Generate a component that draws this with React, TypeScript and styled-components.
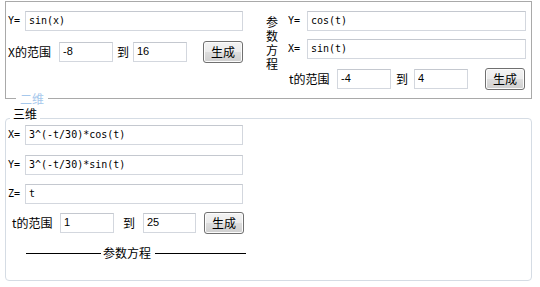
import React from "react";
import styled, { createGlobalStyle } from "styled-components";

const GlobalStyle = createGlobalStyle`
  html, body { margin: 0; padding: 0; background: #ffffff; }
  body {
    font-family: "Noto Sans CJK SC", "Liberation Sans", sans-serif;
    font-size: 12px;
    color: #000;
  }
  * { box-sizing: border-box; }
`;

const Page = styled.div`
  padding: 1px 0 0 5px;
  width: 540px;
`;

const TopPanel = styled.div`
  position: relative;
  width: 527px;
  height: 98px;
  border: 1px solid #a9a9a9;
  display: flex;
  padding: 9px 0 0 1px;
`;

const BottomPanel = styled.div`
  position: relative;
  width: 527px;
  height: 163px;
  margin-top: 19px;
  border: 1px solid #d5dce4;
  border-radius: 4px;
  padding: 6px 0 0 1px;
`;

const Legend = styled.span<{ $light?: boolean }>`
  position: absolute;
  background: #fff;
  padding: 0 3px;
  height: 14px;
  line-height: 14px;
  font-size: 12px;
  color: ${(p) => (p.$light ? "#a6c8ec" : "#000")};
`;

const BottomLegend = styled(Legend)`
  left: 10px;
  bottom: -8px;
  padding: 0 4px;
`;

const TopLegend = styled(Legend)`
  left: 4px;
  top: -12px;
`;

const Column = styled.div<{ $width?: number }>`
  display: flex;
  flex-direction: column;
  ${(p) => (p.$width ? `width: ${p.$width}px;` : "")}
`;

const Row = styled.div<{ $mt?: number; $h?: number }>`
  display: flex;
  align-items: center;
  height: ${(p) => p.$h ?? 20}px;
  margin-top: ${(p) => p.$mt ?? 0}px;
`;

const Label = styled.span<{ $w: number; $pl?: number; $mono?: boolean }>`
  width: ${(p) => p.$w}px;
  padding-left: ${(p) => p.$pl ?? 0}px;
  flex: none;
  white-space: nowrap;
  font-family: ${(p) =>
    p.$mono
      ? `"DejaVu Sans Mono", "Liberation Mono", monospace`
      : `"Noto Sans CJK SC", "Liberation Sans", sans-serif`};
  font-size: ${(p) => (p.$mono ? "10px" : "12px")};
  line-height: 14px;
`;

const TextBox = styled.input<{ $w: number; $mono?: boolean }>`
  width: ${(p) => p.$w}px;
  height: 20px;
  flex: none;
  margin: 0;
  padding: 0 3px 2px;
  border: 1px solid #d3d7de;
  border-top-color: #c4c8cf;
  background: #fff;
  color: #000;
  outline: none;
  font-family: ${(p) =>
    p.$mono
      ? `"DejaVu Sans Mono", "Liberation Mono", monospace`
      : `"Liberation Sans", Arial, sans-serif`};
  font-size: ${(p) => (p.$mono ? "10px" : "11px")};
  line-height: 18px;
`;

const Button = styled.button<{ $ml?: number }>`
  flex: none;
  width: 40px;
  height: 22px;
  margin: 0 0 0 ${(p) => p.$ml ?? 0}px;
  padding: 0;
  border: 1px solid #707070;
  border-radius: 3px;
  background: linear-gradient(#f3f3f3 0%, #ebebeb 50%, #dddddd 51%, #cfcfcf 100%);
  box-shadow: inset 0 0 0 1px #fcfcfc;
  font-family: "Noto Sans CJK SC", sans-serif;
  font-size: 12px;
  line-height: 20px;
  color: #000;
`;

const VerticalTitle = styled.div`
  width: 12px;
  margin: 4px 10px 0 22px;
  line-height: 14px;
  font-size: 12px;
`;

const Divider = styled.div`
  display: flex;
  align-items: center;
  height: 14px;
  margin: 12px 0 0 19px;
  font-size: 12px;
  line-height: 14px;
`;

const Line = styled.span<{ $w: number }>`
  display: block;
  width: ${(p) => p.$w}px;
  height: 1px;
  background: #000;
`;

const DividerText = styled.span`
  margin: 0 4px 0 2px;
`;

export default function App() {
  return (
    <>
      <GlobalStyle />
      <Page>
        <TopPanel>
          <Column $width={237}>
            <Row>
              <Label $w={18} $pl={1} $mono>Y=</Label>
              <TextBox $w={218} $mono defaultValue="sin(x)" />
            </Row>
            <Row $mt={10} $h={22}>
              <Label $w={52} $pl={1}>X的范围</Label>
              <TextBox $w={54} defaultValue="-8" />
              <Label $w={20} $pl={4}>到</Label>
              <TextBox $w={54} defaultValue="16" />
              <Button $ml={16}>生成</Button>
            </Row>
          </Column>
          <VerticalTitle>参数方程</VerticalTitle>
          <Column>
            <Row>
              <Label $w={19} $mono>Y=</Label>
              <TextBox $w={219} $mono defaultValue="cos(t)" />
            </Row>
            <Row $mt={8}>
              <Label $w={19} $mono>X=</Label>
              <TextBox $w={219} $mono defaultValue="sin(t)" />
            </Row>
            <Row $mt={9} $h={22}>
              <Label $w={49} $pl={1}>t的范围</Label>
              <TextBox $w={54} defaultValue="-4" />
              <Label $w={23} $pl={5}>到</Label>
              <TextBox $w={54} defaultValue="4" />
              <Button $ml={17}>生成</Button>
            </Row>
          </Column>
          <BottomLegend $light>二维</BottomLegend>
        </TopPanel>

        <BottomPanel>
          <TopLegend>三维</TopLegend>
          <Row>
            <Label $w={18} $pl={1} $mono>X=</Label>
            <TextBox $w={218} $mono defaultValue="3^(-t/30)*cos(t)" />
          </Row>
          <Row $mt={10}>
            <Label $w={18} $pl={1} $mono>Y=</Label>
            <TextBox $w={218} $mono defaultValue="3^(-t/30)*sin(t)" />
          </Row>
          <Row $mt={9}>
            <Label $w={18} $pl={1} $mono>Z=</Label>
            <TextBox $w={218} $mono defaultValue="t" />
          </Row>
          <Row $mt={8} $h={22}>
            <Label $w={53} $pl={5}>t的范围</Label>
            <TextBox $w={54} defaultValue="1" />
            <Label $w={29} $pl={9}>到</Label>
            <TextBox $w={53} defaultValue="25" />
            <Button $ml={8}>生成</Button>
          </Row>
          <Divider>
            <Line $w={75} />
            <DividerText>参数方程</DividerText>
            <Line $w={91} />
          </Divider>
        </BottomPanel>
      </Page>
    </>
  );
}
